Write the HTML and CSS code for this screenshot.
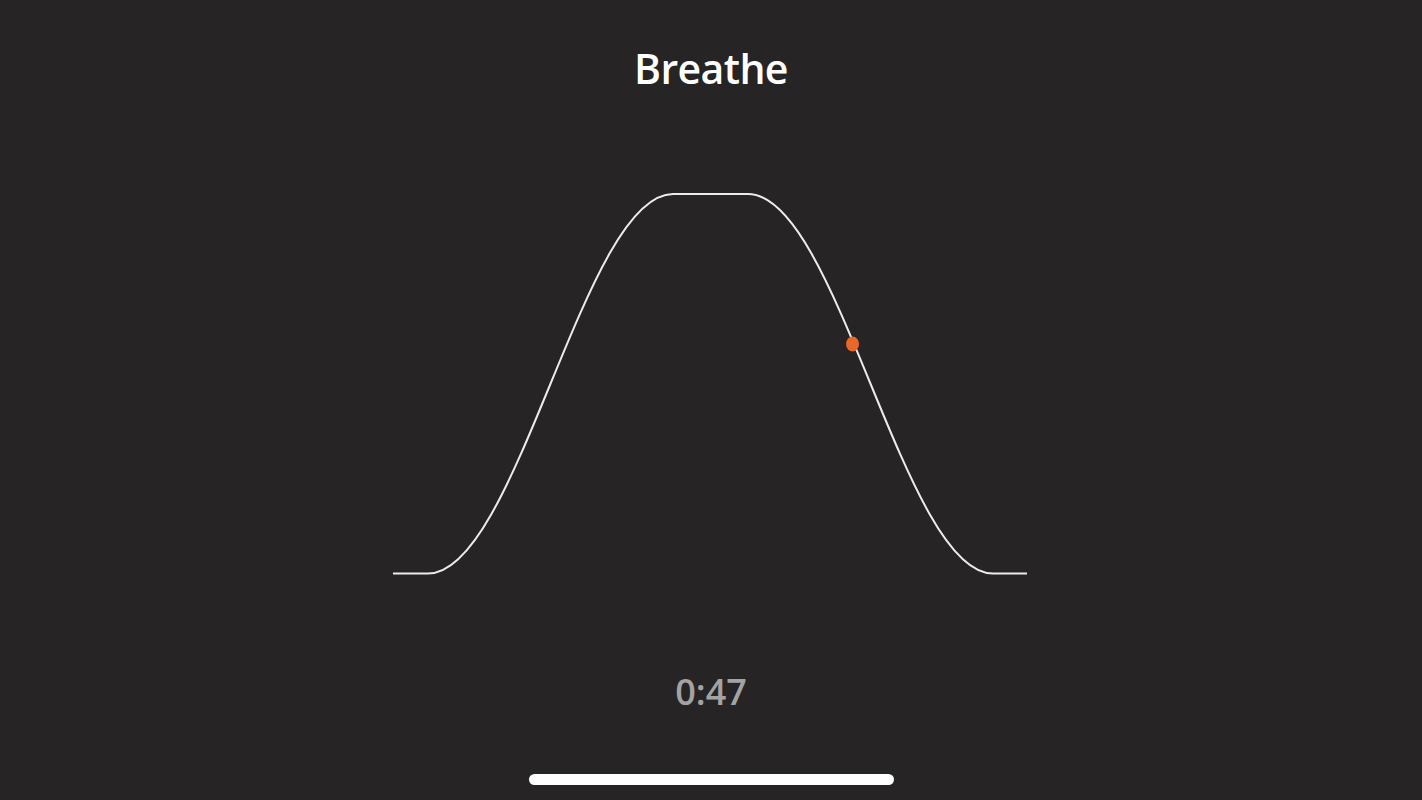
FILE: index.html
```html
<!DOCTYPE html>
<html lang="en">
<head>
<meta charset="utf-8">
<title>Breathe</title>
<link rel="stylesheet" href="styles.css">
</head>
<body>
<main class="screen">
  <h1 class="title">Breathe</h1>
  <svg class="wave" width="640" height="392" viewBox="391 188 640 392" aria-hidden="true">
    <path class="wave-line" d="M393 573.5 H428 C517 573.5 584 194 673 194 H748 C837 194 904 573.5 993 573.5 H1027"/>
    <ellipse class="wave-dot" cx="852.5" cy="344" rx="6.5" ry="7.5"/>
  </svg>
  <div class="timer">0:47</div>
  <div class="home-bar"></div>
</main>
</body>
</html>
```
FILE: styles.css
```css
html, body {
  margin: 0;
  padding: 0;
  background: #262425;
}
.screen {
  width: 1422px;
  height: 800px;
  display: flex;
  flex-direction: column;
  align-items: center;
  padding-top: 40px;
  box-sizing: border-box;
  font-family: "Open Sans", "Liberation Sans", sans-serif;
}
.title {
  margin: 0;
  font-size: 41px;
  line-height: 56px;
  font-weight: 600;
  color: #ffffff;
  letter-spacing: -0.6px;
}
.wave {
  display: block;
  margin-top: 92px;
}
.wave-line {
  fill: none;
  stroke: #ececec;
  stroke-width: 2;
}
.wave-dot {
  fill: #e8672a;
}
.timer {
  margin-top: 90px;
  font-size: 36px;
  line-height: 44px;
  font-weight: 600;
  color: #a3a3a3;
}
.home-bar {
  margin-top: 60px;
  width: 365px;
  height: 11px;
  border-radius: 6px;
  background: #ffffff;
}
```
